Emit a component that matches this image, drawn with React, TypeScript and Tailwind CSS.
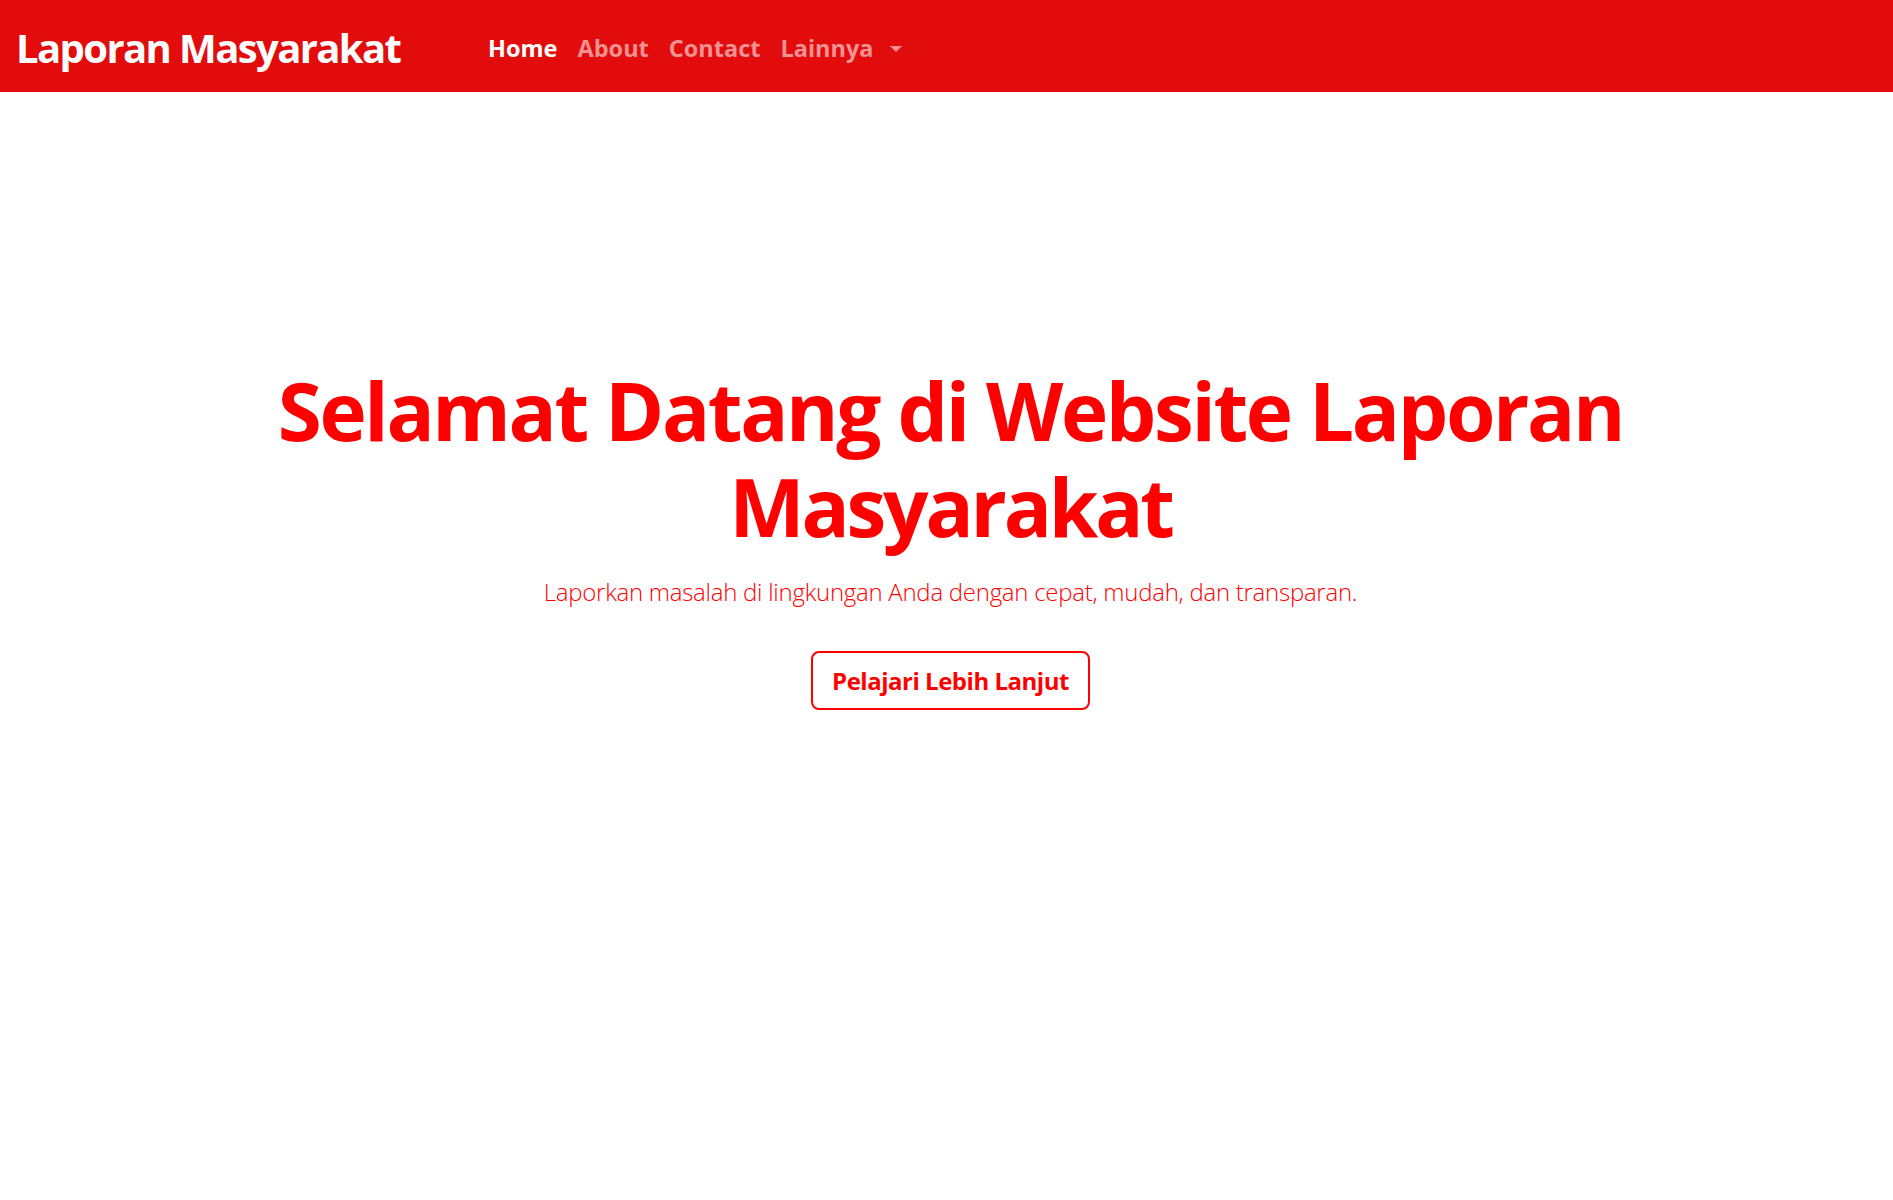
import React from "react";

export default function App() {
  const font = { fontFamily: '"Open Sans", "Noto Sans", sans-serif' };
  return (
    <div className="min-h-[1200px] bg-white" style={font}>
      <nav className="flex h-[92px] items-center bg-[#e20c0c] pl-4">
        <a className="mt-[3px] w-[462px] shrink-0 text-[40px] font-bold leading-none tracking-[-0.04em] text-white" href="#">
          Laporan Masyarakat
        </a>
        <ul className="mt-[5px] flex items-center">
          <li>
            <a className="block px-2.5 text-[23.5px] font-bold text-white" href="#">Home</a>
          </li>
          <li>
            <a className="block px-2.5 text-[23.5px] font-bold text-[#f29292]" href="#">About</a>
          </li>
          <li>
            <a className="block px-2.5 text-[23.5px] font-bold text-[#f29292]" href="#">Contact</a>
          </li>
          <li>
            <a className="flex items-center px-2.5 text-[23.5px] font-bold text-[#f29292]" href="#">
              Lainnya
              <span className="ml-4 inline-block h-0 w-0 border-x-[6px] border-t-[6px] border-x-transparent border-t-[#f29292]" />
            </a>
          </li>
        </ul>
      </nav>
      <main className="flex flex-col items-center pl-2 pt-[270px] text-center">
        <h1 className="text-[80px] font-bold leading-[1.2] tracking-[-0.03em] text-[#ff0000]">
          <span className="block">Selamat Datang di Website Laporan</span>
          <span className="block tracking-[-0.04em]">Masyarakat</span>
        </h1>
        <p className="mt-5 text-[24px] font-light leading-[1.5] tracking-[-0.011em] text-[#ff0000]">
          Laporkan masalah di lingkungan Anda dengan cepat, mudah, dan transparan.
        </p>
        <a
          href="#"
          className="mt-[41px] inline-flex h-[59px] w-[279px] items-center justify-center rounded-lg border-2 border-[#ff0000] text-[24px] font-bold tracking-[-0.02em] text-[#ff0000]"
        >
          Pelajari Lebih Lanjut
        </a>
      </main>
    </div>
  );
}
